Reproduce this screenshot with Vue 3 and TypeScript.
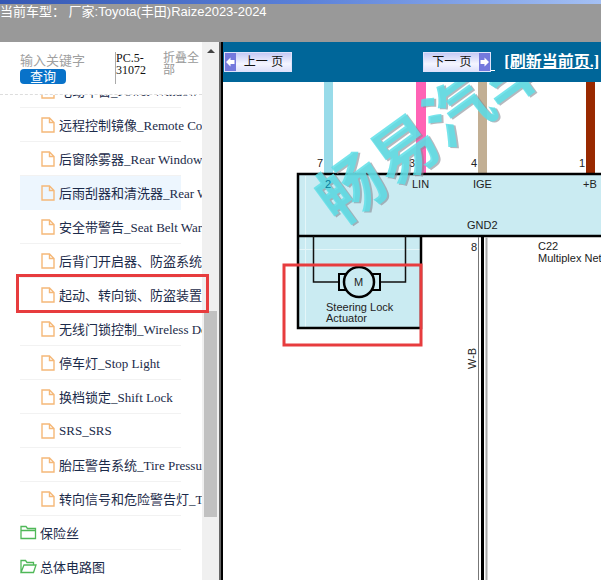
<script setup lang="ts">
import { ref } from 'vue'

interface Doc {
  id: number
  title: string
}

interface Folder {
  id: number
  title: string
  open: boolean
}

const keyword = ref('')
const hovered = ref(4)

const docs: Doc[] = [
  { id: 1, title: '电动车窗_Power Window' },
  { id: 2, title: '远程控制镜像_Remote Control Mirror' },
  { id: 3, title: '后窗除雾器_Rear Window Defogger' },
  { id: 4, title: '后雨刮器和清洗器_Rear Wiper and Washer' },
  { id: 5, title: '安全带警告_Seat Belt Warning' },
  { id: 6, title: '后背门开启器、防盗系统' },
  { id: 7, title: '起动、转向锁、防盗装置' },
  { id: 8, title: '无线门锁控制_Wireless Door Lock' },
  { id: 9, title: '停车灯_Stop Light' },
  { id: 10, title: '换档锁定_Shift Lock' },
  { id: 11, title: 'SRS_SRS' },
  { id: 12, title: '胎压警告系统_Tire Pressure' },
  { id: 13, title: '转向信号和危险警告灯_Turn Signal' },
]

const folders: Folder[] = [
  { id: 21, title: '保险丝', open: false },
  { id: 22, title: '总体电路图', open: true },
]
</script>

<template>
  <div class="page">
    <header class="header">
      <div class="strip"></div>
      <p class="model">当前车型： 厂家:Toyota(丰田)Raize2023-2024</p>
    </header>

    <div class="body">
      <aside class="sidebar">
        <div class="panel">
          <form class="search" @submit.prevent>
            <div class="query">
              <input v-model="keyword" class="keyword" type="text" placeholder="输入关键字" aria-label="输入关键字" />
              <button class="submit" type="submit">查询</button>
            </div>
            <span class="code">PC.5-31072</span>
            <button class="collapse" type="button">折叠全部</button>
          </form>

          <nav class="tree">
            <ul class="list">
              <li v-for="doc in docs" :key="doc.id" class="row doc" :class="{ active: doc.id === hovered }">
                <a class="link" href="#" @mouseenter="hovered = doc.id" @click.prevent>
                  <svg class="file-icon" viewBox="0 0 14 16" aria-hidden="true">
                    <path d="M1 1H8.5L13 5.5V15H1Z M8.5 1V5.5H13" />
                  </svg>
                  <span>{{ doc.title }}</span>
                </a>
              </li>
              <li v-for="folder in folders" :key="folder.id" class="row">
                <a class="link" href="#" @click.prevent>
                  <svg class="folder-icon" viewBox="0 0 17 15" aria-hidden="true">
                    <path v-if="folder.open" d="M1 13.5V1.5H5.5L7 3.5H13.5V6 M1 13.5L4 6H16L13.5 13.5Z" />
                    <path v-else d="M1 13.5V1.5H6L7.5 3.5H15.5V13.5Z M1 5.5H15.5" />
                  </svg>
                  <span>{{ folder.title }}</span>
                </a>
              </li>
            </ul>
          </nav>
        </div>

        <div class="scrollbar" aria-hidden="true">
          <span class="arrow"></span>
          <span class="before"></span>
          <span class="thumb"></span>
          <span class="after"></span>
        </div>
        <div class="mark"></div>
      </aside>

      <main class="viewer">
        <div class="toolbar">
          <button class="pager" type="button">
            <svg class="pager-arrow" viewBox="0 0 11 18" aria-hidden="true">
              <path d="M1 9L5.5 4.5V7H9.5V11H5.5V13.5Z" />
            </svg>
            <span class="pager-label">上一 页</span>
          </button>
          <div class="right">
            <button class="pager" type="button">
              <span class="pager-label">下一 页</span>
              <svg class="pager-arrow" viewBox="0 0 11 18" aria-hidden="true">
                <path d="M10 9L5.5 4.5V7H1.5V11H5.5V13.5Z" />
              </svg>
            </button>
            <span class="gap-line"></span>
            <a class="refresh" href="#" @click.prevent>[刷新当前页.]</a>
          </div>
        </div>

        <svg class="diagram" viewBox="223 82 378 498" preserveAspectRatio="xMinYMin slice">
          <rect x="324" y="82" width="9" height="92" fill="#98dbe9" />
          <rect x="416" y="82" width="10" height="92" fill="#ff63b5" />
          <rect x="478" y="82" width="9" height="92" fill="#c2af94" />
          <rect x="586" y="82" width="9" height="92" fill="#992900" />

          <rect x="298" y="174" width="310" height="62" fill="#caebf2" />
          <rect x="298" y="236" width="123" height="92" fill="#caebf2" />
          <path d="M305.5 176V327M299 249.5H420" stroke="#e4f6f9" fill="none" />

          <g class="thick">
            <path d="M610 174H298V328H421V236" />
            <path d="M298 236H610" />
          </g>

          <g fill="none" stroke="#111" stroke-width="1.5">
            <path d="M313.5 236V282H339M405.5 236V282H379" />
          </g>
          <g fill="#caebf2" stroke="#000" stroke-width="2">
            <rect x="339" y="274" width="8" height="16" />
            <rect x="372" y="274" width="8" height="16" />
            <circle cx="359" cy="282" r="15" stroke-width="2.5" />
          </g>

          <path d="M478.5 237V590" stroke="#777" />
          <path d="M482.5 237V590" stroke="#000" stroke-width="3" />
          <path d="M486.5 237V590" stroke="#aaa" stroke-width="2" />

          <g class="labels">
            <text x="317" y="167">7</text>
            <text x="409" y="167">3</text>
            <text x="471" y="167">4</text>
            <text x="579" y="167">1</text>
            <text x="412" y="188">LIN</text>
            <text x="473" y="188">IGE</text>
            <text x="583" y="188">+B</text>
            <text x="467" y="229">GND2</text>
            <text x="471" y="251">8</text>
            <text x="538" y="250">C22</text>
            <text x="538" y="262">Multiplex Net</text>
            <text x="326" y="311">Steering Lock</text>
            <text x="326" y="322">Actuator</text>
            <text x="354" y="286">M</text>
            <text transform="translate(476 369) rotate(-90)">W-B</text>
          </g>

          <g class="watermark" transform="translate(352 188) rotate(-36)">
            <text class="shade" x="-33" y="26">畅易汽车</text>
            <text class="face" x="-34" y="24">畅易汽车</text>
          </g>
          <text class="pin" x="325" y="188">2</text>

          <rect x="284" y="265" width="137" height="80" fill="none" stroke="#e73c3e" stroke-width="3" />
        </svg>
      </main>
    </div>
  </div>
</template>

<style>
body {
  margin: 0;
  background: #fff;
}
</style>

<style scoped>
.page {
  display: flex;
  flex-direction: column;
  height: 100vh;
  overflow: hidden;
  font-family: 'Liberation Serif', 'Noto Sans CJK SC', serif;
  font-size: 13px;
  color: #1c2b4a;
}

.header {
  flex: none;
  height: 42px;
  background: #999;
}

.strip {
  height: 4px;
  background: linear-gradient(90deg, #3558b4, #5a80d8 50%, #a4c0f4);
}

.model {
  margin: 0;
  line-height: 15px;
  color: #fff;
  font-family: 'Liberation Sans', 'Noto Sans CJK SC', sans-serif;
  white-space: pre;
}

.body {
  display: flex;
  flex: 1;
  min-height: 0;
}

.sidebar {
  position: relative;
  display: flex;
  flex: none;
  width: 219px;
  border-right: 2px solid #666;
}

.panel {
  display: flex;
  flex: 1;
  flex-direction: column;
  min-width: 0;
  overflow: hidden;
}

.search {
  display: flex;
  flex: none;
  align-items: flex-start;
  height: 42px;
  padding: 10px 0 0 20px;
  box-sizing: border-box;
  margin-bottom: 10px;
}

.query {
  display: flex;
  flex-direction: column;
  align-items: flex-start;
  width: 95px;
}

.keyword {
  width: 90px;
  height: 17px;
  padding: 0;
  border: 0;
  outline: 0;
  background: transparent;
  font: inherit;
}

.keyword::placeholder {
  color: #a0a0a0;
}

.submit {
  width: 46px;
  height: 15px;
  padding: 0;
  border: 0;
  border-radius: 4px;
  background: #0872c9;
  color: #fff;
  font: inherit;
  line-height: 15px;
}

.code {
  width: 40px;
  height: 32px;
  border-left: 1px solid #aaa;
  color: #111;
  font-size: 12px;
  line-height: 12px;
}

.collapse {
  width: 38px;
  margin-left: 7px;
  padding: 0;
  border: 0;
  background: none;
  color: #999;
  font: inherit;
  font-size: 12px;
  line-height: 12px;
  text-align: left;
  white-space: normal;
}

.tree {
  flex: 1;
  min-height: 0;
  overflow: hidden;
  border-top: 1px dashed #ddd;
}

.list {
  margin: -21px 21px 0 20px;
  padding: 0;
  list-style: none;
}

.row {
  height: 33px;
  border-bottom: 1px solid #f2f2f2;
}

.doc {
  padding-left: 21px;
}

.active {
  border-bottom-color: #edf6fe;
  background: #edf6fe;
}

.link {
  display: flex;
  align-items: center;
  height: 33px;
  color: inherit;
  text-decoration: none;
  white-space: nowrap;
}

.file-icon {
  flex: none;
  width: 14px;
  height: 16px;
  margin-right: 4px;
  fill: none;
  stroke: #f5b878;
  stroke-width: 1.4;
}

.folder-icon {
  flex: none;
  width: 17px;
  height: 15px;
  margin-right: 3px;
  fill: none;
  stroke: #4fb858;
  stroke-width: 1.3;
}

.scrollbar {
  display: flex;
  flex: none;
  flex-direction: column;
  align-items: center;
  width: 17px;
  background: #f0f0f0;
}

.arrow {
  margin: 7px 0;
  border: 4px solid transparent;
  border-top-width: 0;
  border-bottom-color: #444;
}

.before {
  flex: 251;
}

.thumb {
  flex: 206;
  width: 13px;
  background: #c1c1c1;
}

.after {
  flex: 63;
}

.mark {
  position: absolute;
  top: 232px;
  left: 16px;
  width: 187px;
  height: 33px;
  border: 3px solid #e73c3e;
  pointer-events: none;
}

.viewer {
  display: flex;
  flex: 1;
  flex-direction: column;
  min-width: 0;
  border-left: 2px solid #000;
}

.toolbar {
  display: flex;
  flex: none;
  align-items: center;
  justify-content: space-between;
  height: 40px;
  padding: 0 2px 0 1px;
  background: #069;
}

.right {
  display: flex;
  align-items: center;
}

.pager {
  display: flex;
  align-items: stretch;
  width: 68px;
  height: 20px;
  padding: 0;
  border: 1px solid #dfe2fb;
  background: linear-gradient(#c5caf5, #f4f5ff 60%, #dfe2fb);
  color: #111;
  font: inherit;
  font-family: 'Liberation Sans', 'Noto Sans CJK SC', sans-serif;
  font-size: 12px;
  line-height: 18px;
}

.pager-arrow {
  flex: none;
  width: 11px;
  height: 18px;
  background: #7479dd;
  fill: #fff;
}

.pager-label {
  flex: 1;
  text-align: center;
  white-space: nowrap;
}

.gap-line {
  width: 4px;
  height: 16px;
  margin-right: 9px;
  border-bottom: 1px solid #fff;
}

.refresh {
  color: #fff;
  font-size: 16px;
  font-weight: 700;
  line-height: 20px;
  white-space: nowrap;
}

.diagram {
  flex: 1;
  width: 100%;
  min-height: 0;
  overflow: hidden;
}

.thick path {
  fill: none;
  stroke: #000;
  stroke-width: 2.5;
}

.labels,
.pin {
  font-family: 'Liberation Sans', sans-serif;
  font-size: 11px;
  fill: #222;
}

.pin {
  fill: #087e9c;
}

.watermark {
  font-family: 'Noto Sans CJK SC', sans-serif;
  font-size: 66px;
  font-weight: 700;
}

.shade {
  fill: #858a94;
  opacity: 0.6;
}

.face {
  fill: #5ee0e8;
  opacity: 0.85;
}
</style>
